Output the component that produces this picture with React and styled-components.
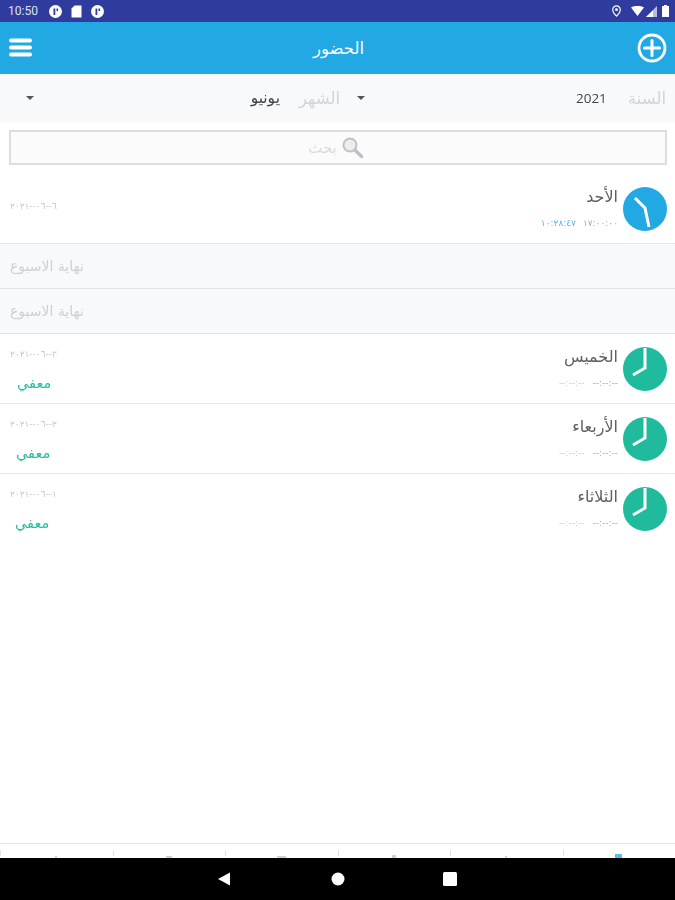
import React from "react";
import styled, { createGlobalStyle } from "styled-components";

const Global = createGlobalStyle`
  html, body { margin: 0; padding: 0; background: #fff; }
  body { font-family: "DejaVu Sans", "Noto Sans", sans-serif; }
`;

const Screen = styled.div`
  height: 900px;
  display: flex;
  flex-direction: column;
  overflow: hidden;
  filter: blur(0.5px);
`;

const StatusBar = styled.div`
  height: 22px;
  flex: none;
  background: #2f3c9e;
  display: flex;
  align-items: center;
  justify-content: space-between;
  padding: 0 6px 0 8px;
`;
const StatusGroup = styled.div`
  display: flex;
  align-items: center;
  gap: ${(p) => p.$gap || 8}px;
`;
const Time = styled.span`
  font: 12px Roboto, sans-serif;
  color: #dfe3f2;
  margin-right: 2px;
`;
const PinIcon = styled.svg`
  margin-right: 5px;
`;
const WifiIcon = styled.svg`
  margin-right: -3px;
`;

const Header = styled.header`
  height: 52px;
  flex: none;
  background: #22a8e2;
  display: grid;
  grid-template-columns: 1fr auto 1fr;
  align-items: center;
  padding: 0 8px 0 9px;
`;
const HeaderEnd = styled.svg`
  justify-self: end;
`;
const Title = styled.h1`
  margin: 0 0 0 1px;
  font-size: 16.5px;
  font-weight: 400;
  color: #fff;
`;

const Filters = styled.div`
  height: 48px;
  flex: none;
  background: #f8f9fb;
  display: flex;
  direction: rtl;
  align-items: center;
`;
const Picker = styled.div`
  width: ${(p) => p.$width}px;
  box-sizing: border-box;
  display: flex;
  align-items: center;
  padding: 0 9px 0 ${(p) => p.$left}px;
`;
const PickerLabel = styled.span`
  font-size: 16.5px;
  color: #d3d4d6;
  margin-left: ${(p) => p.$gap}px;
`;
const PickerValue = styled.span`
  font-family: ${(p) => (p.$latin ? '"Open Sans"' : '"DejaVu Sans"')}, sans-serif;
  font-size: ${(p) => p.$size}px;
  color: #444;
`;
const Caret = styled.span`
  margin-right: auto;
  width: 0;
  height: 0;
  border-left: 4.5px solid transparent;
  border-right: 4.5px solid transparent;
  border-top: 4px solid #555;
`;

const SearchWrap = styled.div`
  height: 52px;
  flex: none;
  box-sizing: border-box;
  padding: 8px 8px 9px 9px;
`;
const SearchBox = styled.div`
  height: 35px;
  box-sizing: border-box;
  border: 2px solid #dcdddd;
  background: #fbfbfc;
  display: flex;
  align-items: center;
  justify-content: center;
  gap: 4px;
  padding-right: 4px;
`;
const SearchText = styled.span`
  font-size: 15px;
  color: #d9dadb;
`;

const List = styled.main`
  flex: 1;
  min-height: 0;
`;
const Row = styled.div`
  height: 70px;
  box-sizing: border-box;
  direction: rtl;
  display: flex;
  align-items: flex-start;
  padding: 13px 8px 0 10px;
  border-bottom: 1.5px solid #e6e7e9;
  &:last-child {
    border-bottom: none;
  }
`;
const Avatar = styled.div`
  width: 44px;
  height: 44px;
  border-radius: 50%;
  background: ${(p) => p.$color};
  flex: none;
  margin-left: 5px;
  display: flex;
`;
const Info = styled.div`
  flex: 1;
  display: flex;
  flex-direction: column;
`;
const DayName = styled.div`
  font-size: 16px;
  line-height: 20px;
  color: #606060;
`;
const Times = styled.div`
  display: flex;
  gap: ${(p) => p.$gap}px;
  margin-top: 10px;
  font-size: 9px;
  line-height: 12px;
`;
const TimeIn = styled.span`
  color: #a9abad;
`;
const TimeOut = styled.span`
  color: ${(p) => (p.$empty ? "#a8d8f2" : "#5fb2e2")};
`;
const Side = styled.div`
  display: flex;
  flex-direction: column;
  justify-content: space-between;
  align-items: flex-end;
  height: 43px;
`;
const DateText = styled.div`
  font-size: 9px;
  line-height: 14px;
  color: #c6c8ca;
  direction: ltr;
  width: 50px;
  margin-top: ${(p) => p.$top || 0}px;
`;
const Exempt = styled.div`
  font-size: 14.5px;
  line-height: 14px;
  color: #24ba9c;
  margin-left: ${(p) => p.$left}px;
`;
const Weekend = styled.div`
  height: ${(p) => p.$height}px;
  box-sizing: border-box;
  background: #f8f9fb;
  border-bottom: 1.5px solid #e1e2e5;
  display: flex;
  align-items: center;
  padding-left: 10px;
  font-size: 14px;
  color: #cfd0d2;
`;

const TabBar = styled.nav`
  height: 15px;
  flex: none;
  box-sizing: border-box;
  border-top: 1px solid #e2e3e4;
  display: grid;
  grid-template-columns: repeat(6, 1fr);
  overflow: hidden;
`;
const Tab = styled.div`
  position: relative;
  display: flex;
  justify-content: center;
  align-items: flex-end;
  &::before {
    content: "";
    position: absolute;
    left: 0;
    bottom: 2px;
    height: 6px;
    width: 1px;
    background: #e2e3e4;
  }
`;
const TabMark = styled.span`
  width: ${(p) => p.$w}px;
  height: ${(p) => p.$h}px;
  background: ${(p) => p.$color};
`;

const NavBar = styled.div`
  height: 42px;
  flex: none;
  background: #000;
  display: flex;
  align-items: center;
  justify-content: center;
  gap: 100px;
`;
const NavSquare = styled.svg`
  margin-left: -2px;
  margin-right: 2px;
`;

const Clock = ({ hands }) => (
  <svg width="44" height="44" viewBox="0 0 44 44">
    <polyline points={hands} fill="none" stroke="#fff" strokeWidth="3" strokeLinejoin="miter" />
  </svg>
);

const rows = [
  { day: "الخميس", date: "٣--٠٦--٢٠٢١", left: 7 },
  { day: "الأربعاء", date: "٢--٠٦--٢٠٢١", left: 6 },
  { day: "الثلاثاء", date: "١--٠٦--٢٠٢١", left: 5 },
];

const CircleR = () => (
  <svg width="15" height="15" viewBox="0 0 15 15">
    <circle cx="7.5" cy="7.5" r="6.5" fill="#fff" />
    <path d="M5.5 11V4.5h1.8v6.5zM8.5 4.5h1.6v2.6H8.5z" fill="#2f3c9e" />
  </svg>
);

export default function App() {
  return (
    <Screen>
      <Global />
      <StatusBar>
        <StatusGroup>
          <Time>10:50</Time>
          <CircleR />
          <svg width="11" height="13" viewBox="0 0 11 13">
            <path d="M3.5 0.5H10.5V12.5H0.5V3.5z" fill="#fff" />
          </svg>
          <CircleR />
        </StatusGroup>
        <StatusGroup $gap={5}>
          <PinIcon width="9" height="12" viewBox="0 0 10 13">
            <path d="M5 .8a4.2 4.2 0 0 1 4.2 4.2C9.2 8 5 12.2 5 12.2S.8 8 .8 5A4.2 4.2 0 0 1 5 .8z" fill="none" stroke="#fff" strokeWidth="1.3" />
            <circle cx="5" cy="5" r="1.6" fill="#fff" />
          </PinIcon>
          <WifiIcon width="13" height="10" viewBox="0 0 13 10">
            <path d="M0 1.5C3.5-.7 9.5-.7 13 1.5L6.5 10z" fill="#fff" />
          </WifiIcon>
          <svg width="11" height="11" viewBox="0 0 11 11">
            <path d="M11 0V11H0z" fill="#b9bedf" />
            <path d="M7 4.5V11H0z" fill="#fff" />
          </svg>
          <svg width="7" height="12" viewBox="0 0 7 12">
            <path d="M2 0h3v1h2v11H0V1h2z" fill="#fff" />
          </svg>
        </StatusGroup>
      </StatusBar>

      <Header>
        <svg width="24" height="20" viewBox="0 0 24 20">
          <g fill="#fff">
            <rect y="0.5" width="23" height="4" rx="2" />
            <rect y="7.5" width="23" height="4" rx="2" />
            <rect y="14.5" width="23" height="4" rx="2" />
          </g>
        </svg>
        <Title>الحضور</Title>
        <HeaderEnd width="30" height="30" viewBox="0 0 30 30">
          <circle cx="15" cy="15" r="13" fill="none" stroke="#fff" strokeWidth="2.8" />
          <path d="M15 7.5V22.5M7.5 15H22.5" stroke="#fff" strokeWidth="3" strokeLinecap="round" />
        </HeaderEnd>
      </Header>

      <Filters>
        <Picker $width={326} $left={7.5}>
          <PickerLabel $gap={21}>السنة</PickerLabel>
          <PickerValue $latin $size={13.5}>2021</PickerValue>
          <Caret />
        </Picker>
        <Picker $width={349} $left={26}>
          <PickerLabel $gap={19}>الشهر</PickerLabel>
          <PickerValue $size={15.5}>يونيو</PickerValue>
          <Caret />
        </Picker>
      </Filters>

      <SearchWrap>
        <SearchBox>
          <SearchText>بحث</SearchText>
          <svg width="23" height="23" viewBox="0 0 23 23">
            <circle cx="9" cy="9" r="6.5" fill="#eceded" stroke="#bfc0c1" strokeWidth="2" />
            <path d="M14 14L20.5 20.5" stroke="#bfc0c1" strokeWidth="3.5" strokeLinecap="round" />
          </svg>
        </SearchBox>
      </SearchWrap>

      <List>
        <Row>
          <Avatar $color="#22a8e2">
            <Clock hands="12,11 22,21 26,40" />
          </Avatar>
          <Info>
            <DayName>الأحد</DayName>
            <Times $gap={7}>
              <TimeIn>١٧:٠٠:٠٠</TimeIn>
              <TimeOut>١٠:٢٨:٤٧</TimeOut>
            </Times>
          </Info>
          <Side>
            <DateText $top={12}>٦--٠٦--٢٠٢١</DateText>
          </Side>
        </Row>
        <Weekend $height={45}>نهاية الاسبوع</Weekend>
        <Weekend $height={45}>نهاية الاسبوع</Weekend>
        {rows.map((r) => (
          <Row key={r.day}>
            <Avatar $color="#20ba9d">
              <Clock hands="22,1 22,21 10,28" />
            </Avatar>
            <Info>
              <DayName>{r.day}</DayName>
              <Times $gap={8}>
                <TimeIn>--:--:--</TimeIn>
                <TimeOut $empty>--:--:--</TimeOut>
              </Times>
            </Info>
            <Side>
              <DateText>{r.date}</DateText>
              <Exempt $left={r.left}>معفي</Exempt>
            </Side>
          </Row>
        ))}
      </List>

      <TabBar>
        <Tab><TabMark $w={2} $h={2} $color="#d0d1d2" /></Tab>
        <Tab><TabMark $w={6} $h={2} $color="#d0d1d2" /></Tab>
        <Tab><TabMark $w={9} $h={2} $color="#d0d1d2" /></Tab>
        <Tab><TabMark $w={4} $h={3} $color="#d0d1d2" /></Tab>
        <Tab><TabMark $w={2} $h={2} $color="#d0d1d2" /></Tab>
        <Tab><TabMark $w={7} $h={4} $color="#5bbcec" /></Tab>
      </TabBar>

      <NavBar>
        <svg width="14" height="14" viewBox="0 0 14 14">
          <path d="M13 0.5V13.5L1 7z" fill="#fff" />
        </svg>
        <svg width="14" height="14" viewBox="0 0 14 14">
          <circle cx="7" cy="7" r="6.5" fill="#fff" />
        </svg>
        <NavSquare width="14" height="14" viewBox="0 0 14 14">
          <rect width="14" height="14" rx="1.5" fill="#fff" />
        </NavSquare>
      </NavBar>
    </Screen>
  );
}
